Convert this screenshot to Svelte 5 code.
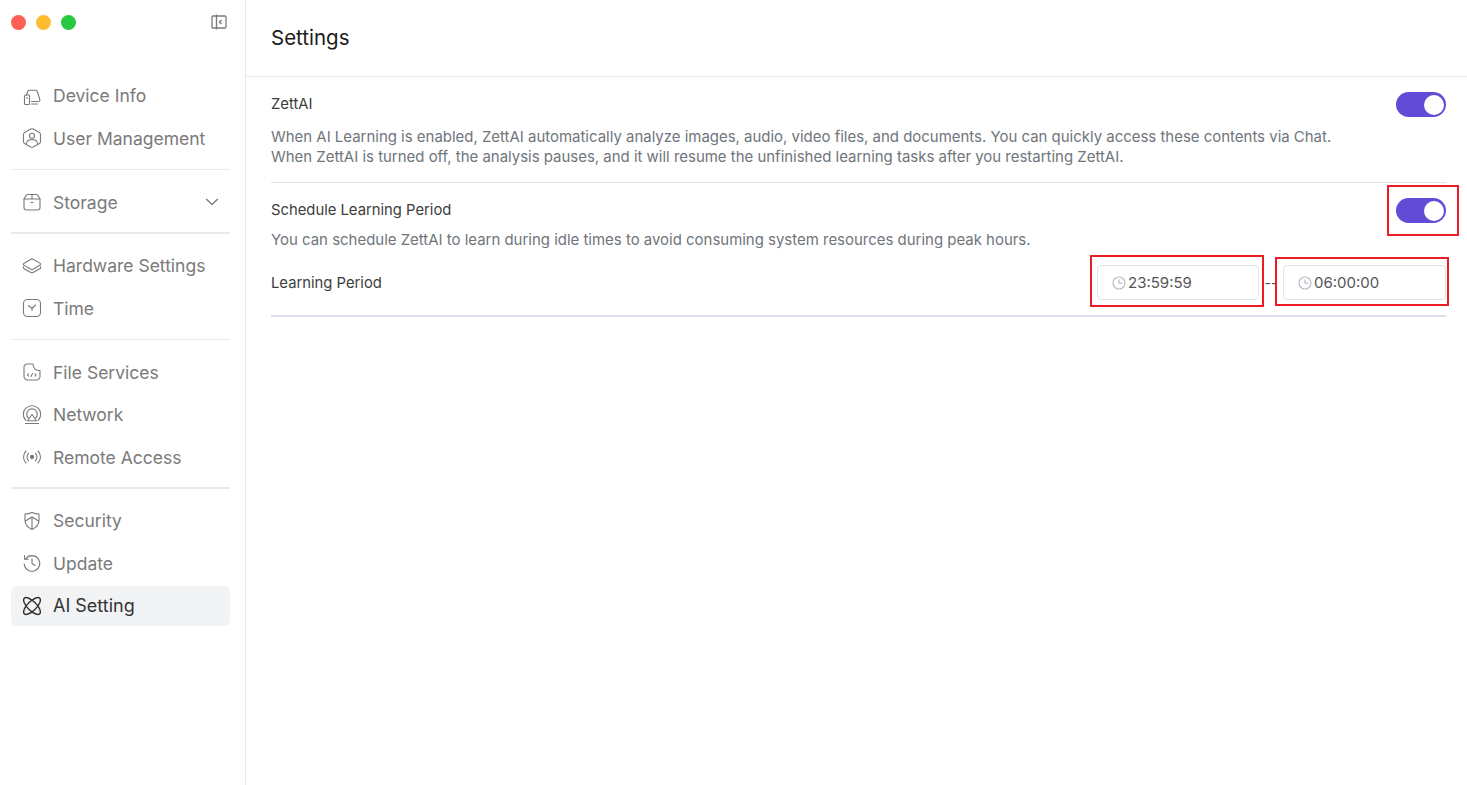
<script>
    const groups = [
        { rule: 'thin', items: [{ id: 'device', label: 'Device Info' }, { id: 'user', label: 'User Management' }] },
        { rule: 'thick', items: [{ id: 'storage', label: 'Storage', more: true }] },
        { rule: 'thin', items: [{ id: 'hardware', label: 'Hardware Settings' }, { id: 'time', label: 'Time' }] },
        { rule: 'thick', items: [{ id: 'file', label: 'File Services' }, { id: 'network', label: 'Network' }, { id: 'remote', label: 'Remote Access' }] },
        { rule: '', items: [{ id: 'security', label: 'Security' }, { id: 'update', label: 'Update' }, { id: 'ai', label: 'AI Setting', active: true }] }
    ]

    const times = ['23:59:59', '06:00:00']
</script>

{#snippet icon(id)}
    <svg class="icon" viewBox="0 0 20 20" fill="none" stroke="currentColor" stroke-width="1.1" stroke-linecap="round" stroke-linejoin="round">
        {#if id === 'device'}
            <rect x="2.500" y="9" width="5" height="9.500" rx="1"/>
            <path d="M5 11.500v1"/>
            <path d="M4.500 9 6 5c.2-.6.6-.8 1.200-.8h6.600c.7 0 1.100.3 1.300.8l2.700 8.500c.3 1.200-.3 2-1.300 2H9.500"/>
            <path d="M9.500 18h6"/>
        {:else if id === 'user'}
            <path d="M8.800 1c.8-.4 1.600-.4 2.400 0l5.900 3.200c.9.500 1.400 1.300 1.400 2.300v7c0 1-.5 1.800-1.400 2.300L11.200 19c-.8.400-1.600.4-2.400 0l-5.900-3.200c-.9-.5-1.400-1.300-1.400-2.300v-7c0-1 .5-1.800 1.400-2.300z"/>
            <circle cx="10" cy="7.800" r="2.500"/>
            <path d="M4.500 15.500c.5-2.600 2.500-4 5.500-4s5 1.400 5.500 4"/>
        {:else if id === 'storage'}
            <path d="M5.500 2.500h9c.6 0 1 .2 1.300.7L18 7v8.500a2.500 2.500 0 0 1-2.500 2.500h-11A2.500 2.500 0 0 1 2 15.500V7l2.200-3.800c.3-.5.7-.7 1.300-.7z"/>
            <path d="M2 7h16M10 2.500V7M9 10.500h2"/>
        {:else if id === 'hardware'}
            <path d="M8.900 3.200c.7-.4 1.500-.4 2.200 0l7.100 4.200c.7.400.7 1.300 0 1.700l-7.100 4.200c-.7.400-1.500.4-2.200 0L1.800 9.100c-.7-.4-.7-1.300 0-1.700z"/>
            <path d="M1.500 10.700c-.5 1 0 1.700.6 2l6.800 3.800c.7.400 1.500.4 2.200 0l6.800-3.800c.6-.3 1.100-1 .6-2"/>
        {:else if id === 'time'}
            <rect x="1.500" y="1.500" width="17" height="17" rx="4"/>
            <path d="M6.500 7.500 10 10.500l3.500-3.500M10 10.500v2"/>
        {:else if id === 'file'}
            <path d="M11 2H5.500A3.500 3.500 0 0 0 2 5.500v9A3.500 3.500 0 0 0 5.500 18h9a3.500 3.500 0 0 0 3.500-3.500V8.500c-4.300.4-6.600-2-7-6.500z"/>
            <path d="M6.500 11.800 5.500 13l1 1.200M13 11.800l1 1.200-1 1.200M10.500 11.500l-1.500 3"/>
        {:else if id === 'network'}
            <path d="M3.800 15.500a8.700 8.700 0 1 1 12.400 0"/>
            <path d="M6.300 13a5.300 5.300 0 1 1 7.400 0"/>
            <path d="M10 9.500 14.500 15.800h-9zM3.500 18.500h13"/>
        {:else if id === 'remote'}
            <circle cx="10" cy="10" r="1.600" fill="currentColor"/>
            <path d="M6.600 6.200a5.500 5.500 0 0 0 0 7.600M13.400 6.200a5.500 5.500 0 0 1 0 7.600M4 4a8.500 8.500 0 0 0 0 12M16 4a8.500 8.500 0 0 1 0 12"/>
        {:else if id === 'security'}
            <path d="M10 1.500c2.300 1 4.800 1.500 7 1.500v6.500c0 4-3 7.200-7 9-4-1.800-7-5-7-9V3c2.200 0 4.700-.5 7-1.500z"/>
            <path d="M3.500 10 10 6l6.500 4M10 6v12"/>
        {:else if id === 'update'}
            <path d="M3.700 5.800A7.800 7.800 0 1 1 2.200 11"/>
            <path d="M2.500 2.500v3.700h3.700"/>
            <path d="M10 6v4.500l3 2"/>
        {:else if id === 'ai'}
            <g stroke-width="1.400">
                <ellipse cx="10" cy="10" rx="11" ry="4.500" transform="rotate(45 10 10)"/>
                <ellipse cx="10" cy="10" rx="11" ry="4.500" transform="rotate(-45 10 10)"/>
            </g>
        {/if}
    </svg>
{/snippet}

{#snippet clock()}
    <svg class="clock" viewBox="0 0 14 14" fill="none" stroke="currentColor" stroke-width="1.200" stroke-linecap="round">
        <circle cx="7" cy="7" r="6"/>
        <path d="M7 3.800V7.200h3"/>
    </svg>
{/snippet}

{#snippet toggle()}
    <span class="toggle"><span class="knob"></span></span>
{/snippet}

<div class="app">
    <aside class="sidebar">
        <div class="titlebar">
            <span class="light red"></span>
            <span class="light yellow"></span>
            <span class="light green"></span>
            <svg class="collapse" viewBox="0 0 16 16" fill="none" stroke="currentColor" stroke-width="1.300">
                <rect x="1" y="2" width="14" height="12" rx="1"/>
                <path d="M5.500 .5v15M10.500 6 8.500 8l2 2" stroke-width="1.400"/>
            </svg>
        </div>

        <nav>
            {#each groups as group}
                <div class="group">
                    {#each group.items as item}
                        <div class="item" class:active={item.active}>
                            {@render icon(item.id)}
                            <span>{item.label}</span>
                            {#if item.more}
                                <svg class="chevron" viewBox="0 0 14 8" fill="none" stroke="currentColor" stroke-width="1.300" stroke-linecap="round" stroke-linejoin="round">
                                    <path d="M1.500 1.200 7 6.500l5.500-5.300"/>
                                </svg>
                            {/if}
                        </div>
                    {/each}
                </div>
                {#if group.rule}
                    <hr class={group.rule} />
                {/if}
            {/each}
        </nav>
    </aside>

    <main>
        <header><h1>Settings</h1></header>

        <section class="first">
            <div class="row">
                <span class="label">ZettAI</span>
                {@render toggle()}
            </div>
            <p class="desc">
                When AI Learning is enabled, ZettAI automatically analyze images, audio, video files, and documents. You can quickly access these contents via Chat.<br />
                When ZettAI is turned off, the analysis pauses, and it will resume the unfinished learning tasks after you restarting ZettAI.
            </p>
        </section>

        <section class="second">
            <div class="row">
                <span class="label">Schedule Learning Period</span>
                <span class="marked">
                    {@render toggle()}
                    <span class="mark mark-toggle"></span>
                </span>
            </div>
            <p class="desc">You can schedule ZettAI to learn during idle times to avoid consuming system resources during peak hours.</p>
            <div class="row period">
                <span class="label">Learning Period</span>
                <div class="range">
                    <div class="time-input">
                        {@render clock()}
                        <span>{times[0]}</span>
                        <span class="mark mark-start"></span>
                    </div>
                    <span class="dash">--</span>
                    <div class="time-input end">
                        {@render clock()}
                        <span>{times[1]}</span>
                        <span class="mark mark-end"></span>
                    </div>
                </div>
            </div>
        </section>
    </main>
</div>

<style>
    :global(body) {
        background: #fff;
        font-family: Inter, "Liberation Sans", sans-serif;
    }

    .app {
        display: flex;
        height: 785px;
        overflow: hidden;
    }

    .sidebar {
        flex: none;
        box-sizing: content-box;
        width: 219px;
        border-right: 1px solid #e8e8ec;
        padding: 0 15px 0 11px;
    }

    .titlebar {
        display: flex;
        align-items: center;
        gap: 10px;
        height: 44px;
    }

    .light {
        width: 15px;
        height: 15px;
        border-radius: 50%;
    }

    .red { background: #ff5f57; }
    .yellow { background: #febc2e; }
    .green { background: #28c840; }

    .collapse {
        width: 16px;
        height: 16px;
        margin-left: auto;
        margin-right: 3px;
        color: #7c7c7c;
    }

    nav {
        padding-top: 31.500px;
    }

    .group {
        display: flex;
        flex-direction: column;
        gap: 2.500px;
    }

    .item {
        display: flex;
        align-items: center;
        height: 40px;
        padding-left: 11px;
        border-radius: 6px;
        color: #7a7a7a;
        font-size: 17.500px;
    }

    .item.active {
        background: #f2f3f5;
        color: #333;
        font-size: 18px;
    }

    .icon {
        width: 20px;
        height: 20px;
        margin-right: 11px;
        flex: none;
    }

    .chevron {
        width: 14px;
        height: 8px;
        margin-left: auto;
        margin-right: 11px;
    }

    hr {
        border: 0;
        background: #e9e9ec;
    }

    hr.thin {
        height: 1px;
        margin: 11px 0 12px;
    }

    hr.thick {
        height: 2px;
        margin: 10px 0 11.500px;
    }

    main {
        flex: 1;
        min-width: 0;
    }

    header {
        height: 74px;
        padding: 0 0 2px 25px;
        border-bottom: 1px solid #e8e8ec;
        display: flex;
        align-items: center;
    }

    h1 {
        margin: 0;
        font-size: 20.500px;
        font-weight: 400;
        color: #1c1c1c;
    }

    section {
        margin: 0 21px 0 25px;
    }

    .first {
        height: 105px;
        border-bottom: 1px solid #e2e2ea;
    }

    .second {
        height: 132px;
        border-bottom: 2px solid #e0e0ea;
    }

    .row {
        display: flex;
        align-items: flex-start;
        justify-content: space-between;
        height: 25px;
        padding-top: 15px;
    }

    .row.period {
        align-items: center;
        height: 35px;
        padding-top: 15px;
    }

    .label {
        font-size: 14.800px;
        line-height: 24px;
        color: #3d3d3d;
    }

    .row.period .label {
        line-height: 20px;
    }

    .desc {
        margin: 0;
        font-size: 14.960px;
        line-height: 20px;
        color: #70757c;
    }

    .first .desc {
        padding-top: 10px;
    }

    .second .desc {
        padding-top: 7px;
    }

    .toggle {
        display: block;
        position: relative;
        width: 50px;
        height: 25px;
        border-radius: 13px;
        background: #624bd6;
    }

    .knob {
        position: absolute;
        right: 2.500px;
        top: 2.500px;
        width: 20px;
        height: 20px;
        border-radius: 50%;
        background: #fff;
    }

    .marked {
        position: relative;
        display: block;
    }

    .range {
        display: flex;
        align-items: center;
    }

    .time-input {
        position: relative;
        display: flex;
        align-items: center;
        gap: 2px;
        width: 162px;
        height: 35px;
        box-sizing: border-box;
        padding-left: 14px;
        border: 1px solid #e2e3e8;
        border-radius: 4px;
        font-size: 15px;
        color: #555;
    }

    .time-input.end {
        width: 163px;
    }

    .clock {
        width: 14px;
        height: 14px;
        color: #b9bcc4;
    }

    .dash {
        width: 24px;
        text-align: center;
        font-size: 14px;
        color: #444;
    }

    /* red annotation frames from the screenshot */
    .mark {
        position: absolute;
        border: 2px solid #ed1c24;
        pointer-events: none;
    }

    .mark-toggle { inset: -13px -13px -13px -9px; }
    .mark-start { inset: -11px -6px -8px -8px; }
    .mark-end { inset: -9px -4px -7px -9px; }
</style>
